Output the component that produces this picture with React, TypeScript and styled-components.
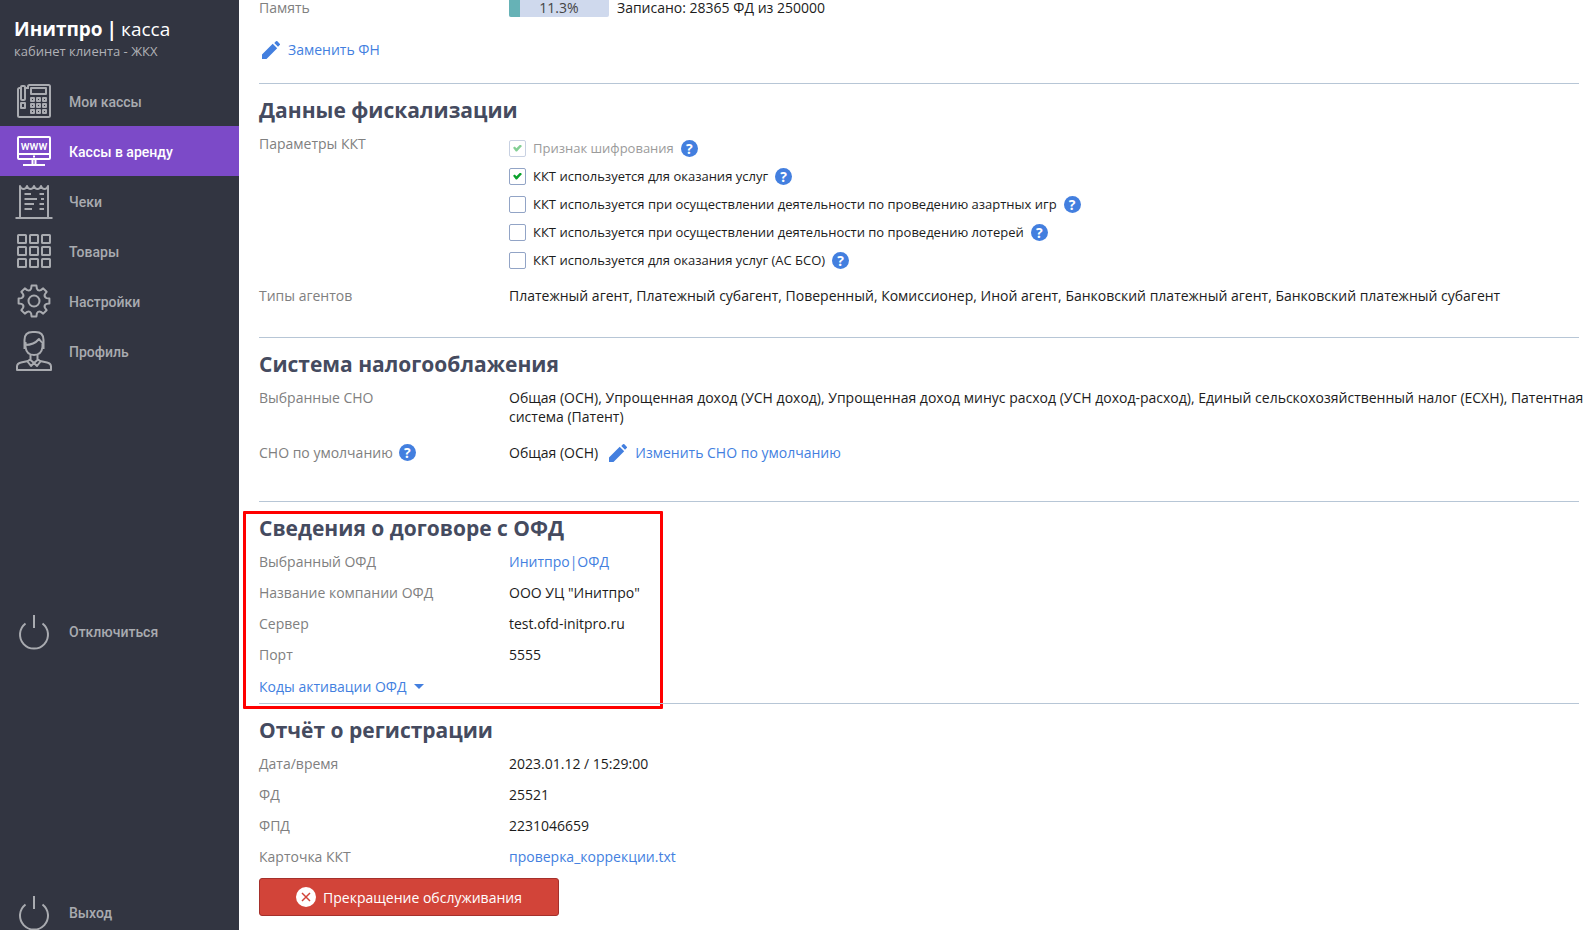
import React, { useId, useState } from "react";
import styled, { createGlobalStyle, css } from "styled-components";

const GlobalStyle = createGlobalStyle`
  *, *::before, *::after { box-sizing: border-box; }
  body {
    margin: 0;
    background: #fff;
    color: #1c1c1c;
    font: 14px/19px "Open Sans", sans-serif;
  }
`;

const Layout = styled.div`
  display: flex;
  height: 100vh;
  overflow: hidden;
`;

/* ---------- sidebar ---------- */

const Sidebar = styled.aside`
  display: flex;
  flex-direction: column;
  justify-content: space-between;
  flex: 0 0 239px;
  height: calc(100% + 8px);
  background: #323541;
`;

const Brand = styled.header`
  height: 76px;
  padding: 16px 14px 0;
  color: #fff;
`;

const BrandName = styled.div`
  display: flex;
  gap: 4px;
  font-size: 19px;
  line-height: 26px;
`;

const BrandNote = styled.div`
  font-size: 13px;
  line-height: 18px;
  color: #b0b1b6;
`;

const Menu = styled.nav`
  display: flex;
  flex-direction: column;
`;

const itemStyle = css`
  display: flex;
  align-items: center;
  gap: 16px;
  width: 100%;
  height: 50px;
  padding: 0 15px;
  border: 0;
  background: none;
  color: #a9abb0;
  font: 500 14px/20px Roboto, sans-serif;
  text-align: left;
  text-decoration: none;
  cursor: pointer;
`;

const MenuLink = styled.a<{ $active?: boolean }>`
  ${itemStyle}
  ${(p) => p.$active && "background: #7c4ac8; color: #fff;"}
`;

const MenuButton = styled.button`
  ${itemStyle}
`;

const MenuText = styled.span`
  padding-top: 2px;
`;

const IconBox = styled.svg`
  flex: none;
  width: 38px;
  height: 42px;
  fill: none;
  stroke: currentColor;
  stroke-width: 2;
  stroke-linejoin: round;
`;

const steps = [0, 1, 2];

const PhoneIcon = () => (
  <IconBox viewBox="0 0 38 42">
    <path d="M13 9V6.5a1.5 1.5 0 0 1 1.500-1.500H33.500a1.500 1.500 0 0 1 1.500 1.500V35.500a1.500 1.500 0 0 1-1.500 1.500H4.500a1.500 1.500 0 0 1-1.500-1.500V9.500a1.500 1.500 0 0 1 1.500-1.500H6M10 8h3" />
    <rect x="6" y="6" width="4" height="14" rx="1" />
    <rect x="6" y="23" width="4" height="5" />
    <rect x="16" y="8" width="15" height="6" />
    {steps.map((r) =>
      steps.map((c) => (
        <rect key={`${r}${c}`} x={16 + c * 6} y={18 + r * 6} width="3" height="3" />
      ))
    )}
  </IconBox>
);

const MonitorIcon = () => (
  <IconBox viewBox="0 0 38 42">
    <rect x="3" y="7" width="32" height="22" rx="1" />
    <path d="M3 24h32M18 26.500h2M17.500 30v4M20.500 30v4M8 35h22" />
    <text x="19" y="20" textAnchor="middle" fill="currentColor" stroke="none" fontSize="12" fontFamily="Roboto, sans-serif">
      www
    </text>
  </IconBox>
);

const ReceiptIcon = () => (
  <IconBox viewBox="0 0 38 42">
    <path d="M5 38V6q1 3 3.500 3t3.500-3q1 3 3.500 3t3.500-3q1 3 3.500 3t3.500-3q1 3 3.500 3t3.500-3V38M0.500 38h37" />
    <path d="M9.500 14h6.500M9.500 19h12.500M9.500 24h9.500M9.500 29h7.500M24.500 14h4.500M26 19h3M24.500 24h4.500M24.500 29h4.500" />
  </IconBox>
);

const GridIcon = () => (
  <IconBox viewBox="0 0 38 42">
    {steps.map((r) =>
      steps.map((c) => (
        <rect key={`${r}${c}`} x={3 + c * 12} y={5 + r * 12} width="8" height="8" rx="0.500" />
      ))
    )}
  </IconBox>
);

const gearPath = (() => {
  const at = (deg: number, r: number) => {
    const a = (deg * Math.PI) / 180;
    return `${(19 + r * Math.sin(a)).toFixed(2)} ${(21 - r * Math.cos(a)).toFixed(2)}`;
  };
  let d = "";
  for (let i = 0; i < 8; i++) {
    const m = i * 45;
    d += `${i ? "L" : "M"}${at(m - 9, 15.6)}L${at(m + 9, 15.6)}L${at(m + 13, 12.8)}Q${at(m + 22.5, 10.6)} ${at(m + 32, 12.8)}`;
  }
  return d + "Z";
})();

const GearIcon = () => (
  <IconBox viewBox="0 0 38 42">
    <path d={gearPath} />
    <circle cx="19" cy="21" r="5.500" />
  </IconBox>
);

const PersonIcon = () => (
  <IconBox viewBox="0 0 38 42">
    <path d="M9.500 19V10q0-8 8-8h3q8 0 8 8v9" />
    <path d="M10 15q9 0 14-6 2 3 4.500 4.500M10.500 12v5q1 8 8.500 8t8.500-8v-5" />
    <path d="M15.500 25v5l3.500 3 3.500-3v-5M15.500 29l-3 2.500 3.500 4.500 3-3 3 3 3.500-4.500-3-2.500" />
    <path d="M13 31l-7 1.500q-4 1-4 4V40h34v-3.500q0-3-4-4L25 31" />
  </IconBox>
);

const PowerIcon = () => (
  <IconBox viewBox="0 0 38 42">
    <path d="M19 4v13M10.500 12.500a14 14 0 1 0 17 0" />
  </IconBox>
);

const menu = [
  { text: "Мои кассы", Icon: PhoneIcon },
  { text: "Кассы в аренду", Icon: MonitorIcon, active: true },
  { text: "Чеки", Icon: ReceiptIcon },
  { text: "Товары", Icon: GridIcon },
  { text: "Настройки", Icon: GearIcon },
  { text: "Профиль", Icon: PersonIcon },
];

/* ---------- content ---------- */

const Main = styled.main`
  flex: 1;
  min-width: 0;
  padding: 0 17px 12px 20px;
  overflow-y: auto;
`;

const Section = styled.section<{ $end?: number }>`
  position: relative;
  display: flex;
  flex-direction: column;
  gap: 12px;
  padding: 11px 0 ${(p) => p.$end ?? 0}px;
  border-top: 1px solid #b7c6d6;
`;

const Memory = styled.section`
  display: flex;
  flex-direction: column;
  gap: 22px;
  padding-bottom: 24px;
`;

const Heading = styled.h2`
  margin: 0 0 -3px;
  font-size: 21px;
  font-weight: 700;
  line-height: 30px;
  color: #454b5f;
`;

const Row = styled.div<{ $height?: number }>`
  display: grid;
  grid-template-columns: 250px minmax(0, 1fr);
  align-items: ${(p) => (p.$height ? "center" : "start")};
  min-height: ${(p) => p.$height ?? 19}px;
`;

const Label = styled.div`
  display: flex;
  align-items: center;
  gap: 6px;
  color: #808080;
`;

const Inline = styled.div`
  display: flex;
  align-items: center;
  gap: 8px;
`;

const MemoryRow = styled(Row)`
  min-height: 17px;
  line-height: 15px;

  ${Inline} {
    align-items: flex-start;
  }
`;

/* Long lists may run slightly into the page margin before they wrap. */
const Value = styled.div`
  margin-right: -12px;
`;

const Link = styled.a`
  color: #437fdf;
  text-decoration: none;
`;

const EditLink = styled(Link)`
  display: flex;
  align-items: center;
  align-self: flex-start;
  gap: 8px;
  height: 20px;
  margin-left: 3px;
`;

const Meter = styled.div`
  position: relative;
  width: 100px;
  height: 17px;
  border-radius: 0 0 2px 2px;
  overflow: hidden;
  background: #cfd9ed;
  text-align: center;
  color: #444;
`;

const MeterFill = styled.div`
  position: absolute;
  inset: 0 auto 0 0;
  background: #66b2b6;
`;

const PencilIcon = () => (
  <svg width="18" height="20" viewBox="3 1 18 20" fill="#437fdf" aria-hidden="true">
    <path d="M3 16.500V21h4.500L18.200 10.300l-4.500-4.500L3 16.500zM20.710 7.040a1 1 0 0 0 0-1.410l-2.340-2.340a1 1 0 0 0-1.410 0l-1.700 1.700 3.750 3.750 1.700-1.700z" />
  </svg>
);

const HelpButton = styled.button`
  flex: none;
  width: 17px;
  height: 17px;
  padding: 0;
  border: 0;
  border-radius: 50%;
  background: #437fdf;
  color: #fff;
  font: 700 14px/17px "Open Sans", sans-serif;
  text-align: center;
  cursor: pointer;
`;

const Help = () => <HelpButton type="button" aria-label="Справка">?</HelpButton>;

const CheckRow = styled.div`
  display: flex;
  align-items: center;
  gap: 7px;
  height: 28px;
`;

const CheckLabel = styled.label`
  font-size: 13px;
  line-height: 18px;

  input:disabled + & {
    color: #9b9b9b;
  }
`;

const CheckInput = styled.input`
  appearance: none;
  flex: none;
  display: grid;
  place-items: center;
  width: 17px;
  height: 17px;
  margin: 0;
  border: 1px solid #92a4c6;
  border-radius: 2px;
  background: #fff;

  &:checked::before {
    content: "";
    width: 9px;
    height: 7px;
    background: #0aa12b;
    clip-path: polygon(0 45%, 20% 30%, 38% 52%, 80% 0, 100% 22%, 44% 100%, 32% 100%);
  }

  &:disabled {
    opacity: 0.5;
  }
`;

function Check({ text, checked = false, disabled }: { text: string; checked?: boolean; disabled?: boolean }) {
  const id = useId();
  const [on, setOn] = useState(checked);
  return (
    <CheckRow>
      <CheckInput id={id} type="checkbox" checked={on} disabled={disabled} onChange={() => setOn(!on)} />
      <CheckLabel htmlFor={id}>{text}</CheckLabel>
      <Help />
    </CheckRow>
  );
}

const Disclosure = styled.button`
  display: flex;
  align-items: center;
  align-self: flex-start;
  gap: 7px;
  height: 21px;
  padding: 0;
  border: 0;
  background: none;
  color: #437fdf;
  font: inherit;
  cursor: pointer;

  &::after {
    content: "";
    border: 5px solid transparent;
    border-top-color: currentColor;
    border-bottom: 0;
  }
`;

const Highlight = styled.div`
  position: absolute;
  top: 9px;
  bottom: -6px;
  left: -16px;
  width: 420px;
  border: 3px solid #f00;
  border-radius: 1px;
  pointer-events: none;
`;

const StopButton = styled.button`
  display: flex;
  align-items: center;
  justify-content: center;
  gap: 7px;
  width: 300px;
  height: 38px;
  border: 1px solid #a5302b;
  border-radius: 3px;
  background: #d24439;
  color: #fff;
  font: inherit;
  cursor: pointer;
`;

const memoryUsed = 11.3;

export default function App() {
  return (
    <>
      <GlobalStyle />
      <Layout>
        <Sidebar>
          <div>
            <Brand>
              <BrandName>
                <b>Инитпро</b>
                <b>|</b>
                <span>касса</span>
              </BrandName>
              <BrandNote>кабинет клиента - ЖКХ</BrandNote>
            </Brand>
            <Menu>
              {menu.map(({ text, Icon, active }) => (
                <MenuLink key={text} href="#" $active={active}>
                  <Icon />
                  <MenuText>{text}</MenuText>
                </MenuLink>
              ))}
            </Menu>
          </div>
          <MenuButton type="button">
            <PowerIcon />
            Отключиться
          </MenuButton>
          <MenuButton type="button">
            <PowerIcon />
            Выход
          </MenuButton>
        </Sidebar>

        <Main>
          <Memory>
            <MemoryRow>
              <Label>Память</Label>
              <Inline>
                <Meter>
                  <MeterFill style={{ width: `${memoryUsed}%` }} />
                  {memoryUsed}%
                </Meter>
                Записано: 28365 ФД из 250000
              </Inline>
            </MemoryRow>
            <EditLink href="#">
              <PencilIcon />
              Заменить ФН
            </EditLink>
          </Memory>

          <Section $end={32}>
            <Heading>Данные фискализации</Heading>
            <Row>
              <Label>Параметры ККТ</Label>
              <div>
                <Check text="Признак шифрования" checked disabled />
                <Check text="ККТ используется для оказания услуг" checked />
                <Check text="ККТ используется при осуществлении деятельности по проведению азартных игр" />
                <Check text="ККТ используется при осуществлении деятельности по проведению лотерей" />
                <Check text="ККТ используется для оказания услуг (АС БСО)" />
              </div>
            </Row>
            <Row>
              <Label>Типы агентов</Label>
              <Value>
                Платежный агент, Платежный субагент, Поверенный, Комиссионер, Иной агент, Банковский платежный агент,
                Банковский платежный субагент
              </Value>
            </Row>
          </Section>

          <Section $end={35}>
            <Heading>Система налогооблажения</Heading>
            <Row>
              <Label>Выбранные СНО</Label>
              <Value>
                Общая (ОСН), Упрощенная доход (УСН доход), Упрощенная доход минус расход (УСН доход-расход), Единый
                сельскохозяйственный налог (ЕСХН), Патентная система (Патент)
              </Value>
            </Row>
            <Row $height={28}>
              <Label>
                СНО по умолчанию
                <Help />
              </Label>
              <Inline>
                Общая (ОСН)
                <EditLink href="#">
                  <PencilIcon />
                  Изменить СНО по умолчанию
                </EditLink>
              </Inline>
            </Row>
          </Section>

          <Section $end={6}>
            <Heading>Сведения о договоре с ОФД</Heading>
            <Row>
              <Label>Выбранный ОФД</Label>
              <Link href="#">Инитпро|ОФД</Link>
            </Row>
            <Row>
              <Label>Название компании ОФД</Label>
              <Value>ООО УЦ "Инитпро"</Value>
            </Row>
            <Row>
              <Label>Сервер</Label>
              <Value>test.ofd-initpro.ru</Value>
            </Row>
            <Row>
              <Label>Порт</Label>
              <Value>5555</Value>
            </Row>
            <Disclosure type="button">Коды активации ОФД</Disclosure>
            <Highlight />
          </Section>

          <Section>
            <Heading>Отчёт о регистрации</Heading>
            <Row>
              <Label>Дата/время</Label>
              <Value>2023.01.12 / 15:29:00</Value>
            </Row>
            <Row>
              <Label>ФД</Label>
              <Value>25521</Value>
            </Row>
            <Row>
              <Label>ФПД</Label>
              <Value>2231046659</Value>
            </Row>
            <Row>
              <Label>Карточка ККТ</Label>
              <Link href="#">проверка_коррекции.txt</Link>
            </Row>
            <StopButton type="button">
              <svg width="20" height="20" viewBox="0 0 20 20" aria-hidden="true">
                <circle cx="10" cy="10" r="10" fill="#fff" />
                <path d="M6 6l8 8M14 6l-8 8" stroke="#d24439" strokeWidth="1.500" />
              </svg>
              Прекращение обслуживания
            </StopButton>
          </Section>
        </Main>
      </Layout>
    </>
  );
}
